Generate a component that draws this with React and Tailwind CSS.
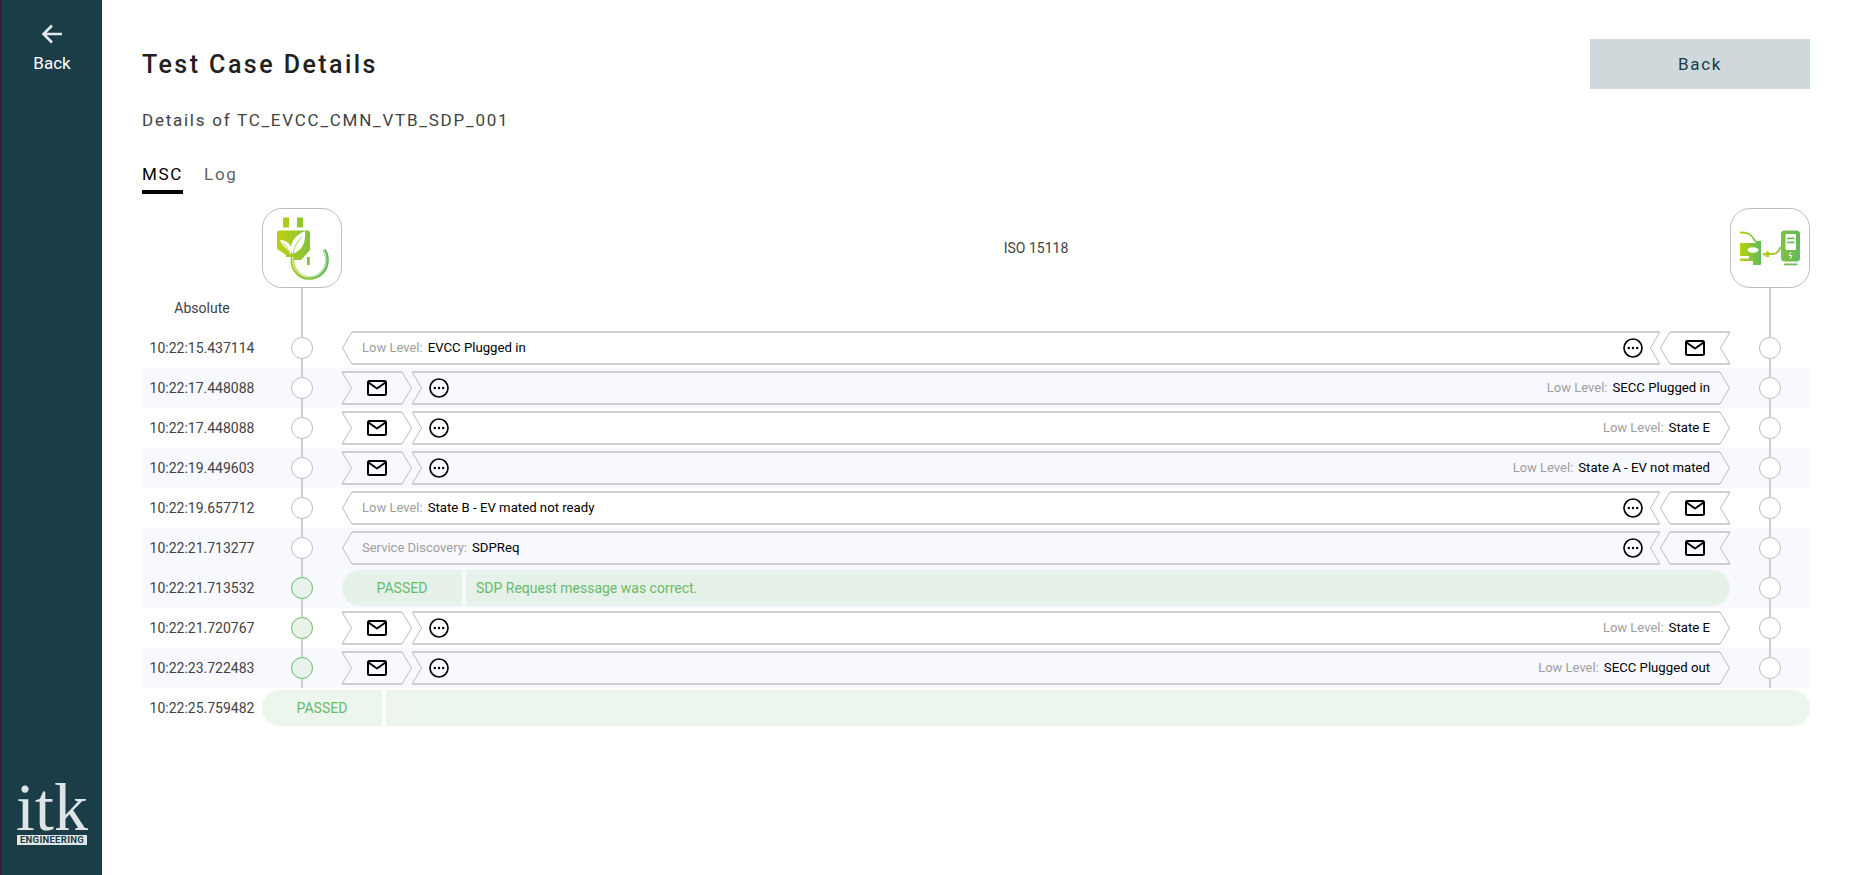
import React from 'react';

const rows = [
  { time: '10:22:15.437114', dir: 'left', label: 'Low Level:', text: 'EVCC Plugged in' },
  { time: '10:22:17.448088', dir: 'right', label: 'Low Level:', text: 'SECC Plugged in', band: true },
  { time: '10:22:17.448088', dir: 'right', label: 'Low Level:', text: 'State E' },
  { time: '10:22:19.449603', dir: 'right', label: 'Low Level:', text: 'State A - EV not mated', band: true },
  { time: '10:22:19.657712', dir: 'left', label: 'Low Level:', text: 'State B - EV mated not ready' },
  { time: '10:22:21.713277', dir: 'left', label: 'Service Discovery:', text: 'SDPReq', band: true },
  { time: '10:22:21.713532', verdict: 'SDP Request message was correct.', band: true, green: true },
  { time: '10:22:21.720767', dir: 'right', label: 'Low Level:', text: 'State E', green: true },
  { time: '10:22:23.722483', dir: 'right', label: 'Low Level:', text: 'SECC Plugged out', band: true, green: true },
];

function MailIcon() {
  return (
    <svg width="20" height="16" viewBox="0 0 20 16" fill="none" stroke="#000" strokeWidth="2" strokeLinejoin="round">
      <rect x="1" y="1" width="18" height="14" rx="1.5" />
      <path d="M1.5 2.5L10 8.5L18.5 2.5" />
    </svg>
  );
}

function DotsIcon() {
  return (
    <svg width="20" height="20" viewBox="0 0 20 20" fill="none">
      <circle cx="10" cy="10" r="9" stroke="#000" strokeWidth="1.7" />
      <circle cx="5.8" cy="10" r="1.2" fill="#000" />
      <circle cx="10" cy="10" r="1.2" fill="#000" />
      <circle cx="14.2" cy="10" r="1.2" fill="#000" />
    </svg>
  );
}

// end of a chevron: both ends share the same diagonal, only the open side gets the top and bottom rails
function Cap({ dir, rails }) {
  const diagonal = dir === 'left' ? 'M10 1L0.5 17L10 33' : 'M0 1L9.5 17L0 33';
  return (
    <svg width="10" height="34" viewBox="0 0 10 34" fill="none" className="shrink-0">
      {rails && <path d="M0 1H10M0 33H10" stroke="#d0d0d4" strokeWidth="2" />}
      <path d={diagonal} stroke="#bdbdbd" strokeWidth="1" />
    </svg>
  );
}

// dir = the way the arrow points; the tip sits on that side, the notch on the other
function Chevron({ dir, className, children }) {
  const left = dir === 'left';
  return (
    <div className={`flex h-[34px] ${className}`}>
      <Cap dir={dir} rails={!left} />
      <div className="flex min-w-0 flex-1 items-center border-y-2 border-[#d0d0d4]">{children}</div>
      <Cap dir={dir} rails={left} />
    </div>
  );
}

function Lane({ green }) {
  return (
    <div className="flex h-full w-20 shrink-0 flex-col items-center">
      <div className="w-0.5 flex-1 bg-[#d0d0d0]" />
      <div className={`h-[22px] w-[22px] shrink-0 rounded-full border ${green ? 'border-[#66bb6a] bg-[#e9f3ea]' : 'border-[#bdbdbd] bg-white'}`} />
      <div className="w-0.5 flex-1 bg-[#d0d0d0]" />
    </div>
  );
}

function Message({ row }) {
  const body = (
    <>
      <span className="text-[#9e9e9e]">{row.label}</span>
      <span className="ml-[5px] text-[13.2px] text-black">{row.text}</span>
    </>
  );
  if (row.dir === 'left') {
    return (
      <div className="flex flex-1 text-[13px]">
        <Chevron dir="left" className="flex-1">
          <div className="flex flex-1 items-center justify-between pl-[10px] pr-[7px]">
            <div>{body}</div>
            <DotsIcon />
          </div>
        </Chevron>
        <Chevron dir="left" className="w-[70px]">
          <div className="flex flex-1 justify-center pr-px">
            <MailIcon />
          </div>
        </Chevron>
      </div>
    );
  }
  return (
    <div className="flex flex-1 text-[13px]">
      <Chevron dir="right" className="w-[70px]">
        <div className="flex flex-1 justify-center">
          <MailIcon />
        </div>
      </Chevron>
      <Chevron dir="right" className="flex-1">
        <div className="flex flex-1 items-center justify-between pl-[7px] pr-[10px]">
          <DotsIcon />
          <div>{body}</div>
        </div>
      </Chevron>
    </div>
  );
}

function Verdict({ text, tint }) {
  return (
    <div className="flex h-9 flex-1 gap-1 text-sm text-[#66bb6a]">
      <div className={`flex w-[120px] items-center justify-center rounded-l-[18px] ${tint}`}>PASSED</div>
      <div className={`flex flex-1 items-center rounded-r-[18px] pl-[10px] ${tint}`}>{text}</div>
    </div>
  );
}

function PlugLogo() {
  return (
    <svg width="78" height="78" viewBox="1 1 78 78" fill="none">
      <defs>
        <linearGradient id="plugGrad" gradientUnits="userSpaceOnUse" x1="15" y1="40" x2="66" y2="40">
          <stop offset="0" stopColor="#bdd00e" />
          <stop offset="1" stopColor="#62ba5a" />
        </linearGradient>
      </defs>
      <path d="M21 9.500h6v10h-6zM35 9.500h6v10h-6z" fill="url(#plugGrad)" />
      <path d="M15 25a2.500 2.500 0 0 1 2.500-2.500h28a2.500 2.500 0 0 1 2.500 2.500v17l-9 10h-8l-1-3h-6v-2l-9-6z" fill="url(#plugGrad)" />
      <path d="M30 46c-3-9 1-18 13-23 1 12-3 20-13 23z" fill="#fff" />
      <path d="M28 47c-1-6-7-7-10-15 7 0 12 5 12 11z" fill="#fff" />
      <path d="M31 48c0-8 4-14 9-19M28 47c-1-5-4-9-7-12" stroke="url(#plugGrad)" strokeWidth="0.9" />
      <path d="M31 48c-3 11 5 22 16 22 11 0 18-8 18-18 0-4-1-8-3-10" stroke="url(#plugGrad)" strokeWidth="3.6" />
      <path d="M31 49c-2 10 5 20 16 20 10 0 17-7 17-17 0-4-1-7-2-9" stroke="#fff" strokeWidth="0.8" />
      <path d="M45 49h2.800v8H45z" fill="url(#plugGrad)" />
    </svg>
  );
}

function ChargerLogo() {
  return (
    <svg width="78" height="78" viewBox="1 1 78 78" fill="none">
      <defs>
        <linearGradient id="carGrad" gradientUnits="userSpaceOnUse" x1="10" y1="40" x2="31" y2="40">
          <stop offset="0" stopColor="#bdd00e" />
          <stop offset="1" stopColor="#62ba5a" />
        </linearGradient>
        <linearGradient id="stationGrad" gradientUnits="userSpaceOnUse" x1="33" y1="40" x2="70" y2="40">
          <stop offset="0" stopColor="#bdd00e" />
          <stop offset="0.55" stopColor="#7cc044" />
          <stop offset="1" stopColor="#62ba5a" />
        </linearGradient>
      </defs>
      <path d="M10 24.500c7 0 11 1 14 7l3 3.500" stroke="url(#carGrad)" strokeWidth="1.800" />
      <path d="M10 35h16l1-2h4v23a1 1 0 0 1-1 1h-7v-4H10v-2.500h9V48H10z" fill="url(#carGrad)" />
      <ellipse cx="23" cy="42" rx="5.500" ry="2.800" fill="#fff" />
      <path d="M39 46c6 0 8 0 10-4 1-2 1.500-3 3-3.500" stroke="url(#stationGrad)" strokeWidth="1.800" />
      <path d="M33 45h3v-1.500h3V49h-3v-1.500h-3z" fill="url(#stationGrad)" />
      <rect x="51" y="22.500" width="19" height="31" rx="3.500" fill="url(#stationGrad)" />
      <rect x="55.500" y="26" width="10.500" height="16" rx="1" fill="#fff" />
      <path d="M57 29.500h7.500v1.800H57zM57 33.500h7.500v1.800H57z" fill="url(#stationGrad)" />
      <path d="M61 44l-2 3.500h3l-2 3.500" stroke="#fff" strokeWidth="1" />
      <path d="M54 55.500h13.500v1.800H54z" fill="url(#stationGrad)" />
    </svg>
  );
}

export default function App() {
  return (
    <div className="flex h-[875px] bg-white font-[Roboto,sans-serif] text-[#212121]">
      <aside className="flex w-[102px] shrink-0 flex-col items-center justify-between border-l-2 border-[#3a1c33] bg-[#1a3d47] pb-[30px] pt-[22px] text-white">
        <div className="flex flex-col items-center">
          <svg width="24" height="24" viewBox="0 0 24 24" fill="none" stroke="#e3e8ea" strokeWidth="2.600">
            <path d="M22 12H3.500M12 3.500L3.500 12L12 20.500" />
          </svg>
          <span className="mt-[7px] text-[17px] leading-5">Back</span>
        </div>
        <div className="flex w-[70px] flex-col items-center text-[#dfe4e6]">
          <span className="font-['Liberation_Serif',serif] text-[68px] leading-[50px]">itk</span>
          <span className="mt-[3px] w-full bg-[#dfe4e6] text-center text-[9.5px] font-bold leading-[10px] tracking-[0.3px] text-[#1a3d47]">ENGINEERING</span>
        </div>
      </aside>

      <main className="min-w-0 flex-1 pl-10 pr-10 pt-[39px]">
        <div className="flex h-[50px] items-center justify-between">
          <h1 className="pt-px text-[25px] font-medium tracking-[2.45px]">Test Case Details</h1>
          <button className="h-[50px] w-[220px] bg-[#cfd8da] pt-0.5 text-[17px] tracking-[1.7px] text-[#1a3d47]">Back</button>
        </div>
        <p className="mt-[19px] text-[17px] leading-6 tracking-[1.75px] text-[#424242]">Details of TC_EVCC_CMN_VTB_SDP_001</p>

        <div className="mt-[23px] flex h-[39px] items-start gap-[21px] pt-0.5 text-[17px] leading-7 tracking-[1.7px]">
          <div className="h-[37px] border-b-4 border-black pt-[3px] text-black">MSC</div>
          <div className="pt-[3px] text-[#616161]">Log</div>
        </div>

        <div className="mt-[14px] flex h-20">
          <div className="w-[120px] shrink-0" />
          <div className="flex h-20 w-20 shrink-0 items-center justify-center rounded-[20px] border border-[#bdbdbd]">
            <PlugLogo />
          </div>
          <div className="flex flex-1 items-center justify-center text-sm text-[#424242]">ISO 15118</div>
          <div className="flex h-20 w-20 shrink-0 items-center justify-center rounded-[20px] border border-[#bdbdbd]">
            <ChargerLogo />
          </div>
        </div>

        <div className="flex h-10 items-stretch">
          <div className="flex w-[120px] shrink-0 items-center justify-center text-sm text-[#424242]">Absolute</div>
          <div className="flex w-20 shrink-0 justify-center">
            <div className="w-0.5 bg-[#d0d0d0]" />
          </div>
          <div className="flex-1" />
          <div className="flex w-20 shrink-0 justify-center">
            <div className="w-0.5 bg-[#d0d0d0]" />
          </div>
        </div>

        {rows.map((row, i) => (
          <div key={i} className={`flex h-10 items-center ${row.band ? 'bg-[#f8f9ff]' : ''}`}>
            <div className="w-[120px] shrink-0 text-center text-sm text-[#424242]">{row.time}</div>
            <Lane green={row.green} />
            {row.verdict ? (
              <Verdict text={row.verdict} tint="bg-[#e6f1ea]" />
            ) : (
              <Message row={row} />
            )}
            <Lane />
          </div>
        ))}

        <div className="mt-0.5 flex h-9 items-center">
          <div className="w-[120px] shrink-0 text-center text-sm text-[#424242]">10:22:25.759482</div>
          <Verdict text="" tint="bg-[#edf6ed]" />
        </div>
      </main>
    </div>
  );
}
